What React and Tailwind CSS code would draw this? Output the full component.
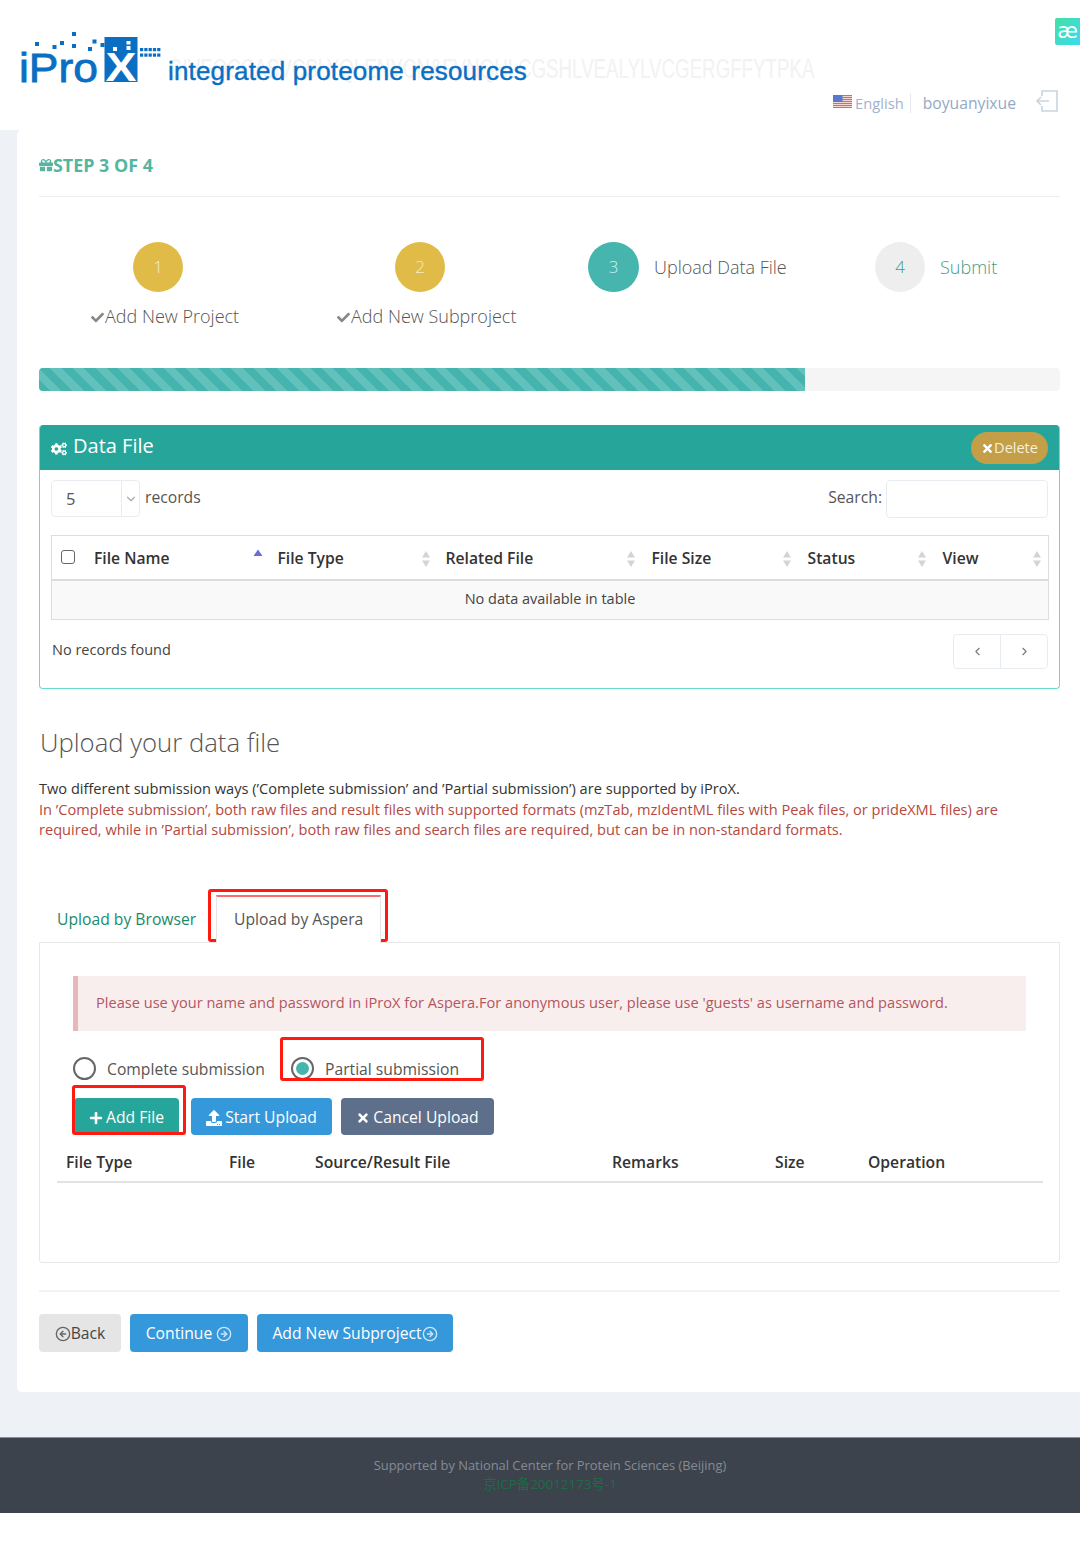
import React from "react";
import { FaGift, FaCheck, FaCogs, FaTimes, FaPlus, FaUpload } from "react-icons/fa";
import { CircleArrowRight, CircleArrowLeft, ChevronDown, ChevronLeft, ChevronRight } from "lucide-react";

const Logo = () => (
  <svg width="145" height="56" viewBox="0 0 145 56" className="shrink-0">
    <g fill="#0a6fc2">
      <rect x="15" y="12" width="4" height="4" />
      <rect x="32.5" y="15" width="4" height="4" />
      <rect x="40" y="11" width="4" height="4" />
      <rect x="52" y="2" width="4" height="4" />
      <rect x="52" y="14" width="4" height="4" />
      <rect x="68" y="17" width="4" height="4" />
      <rect x="72.5" y="9.5" width="4" height="4" />
      <rect x="80.5" y="13" width="4" height="4" />
      <rect x="84.5" y="7" width="33" height="45" />
      {[0, 1, 2, 3, 4].map((c) => (
        <g key={c}>
          <rect x={120 + c * 4.3} y="18" width="3.2" height="3.2" />
          <rect x={120 + c * 4.3} y="23.5" width="3.2" height="3.2" />
        </g>
      ))}
    </g>
    <rect x="93" y="17" width="4" height="4" fill="#fff" />
    <rect x="106.5" y="11" width="4" height="3.5" fill="#fff" />
    <rect x="106.5" y="16" width="4" height="4" fill="#fff" />
    <text x="-1" y="52" fontFamily="Liberation Sans" fontSize="40" fontWeight="400" fill="#0a6fc2" stroke="#0a6fc2" strokeWidth="0.8" textLength="79" lengthAdjust="spacingAndGlyphs">iPro</text>
    <text x="85.5" y="51" fontFamily="Liberation Sans" fontSize="40" fontWeight="700" fill="#fff" textLength="31" lengthAdjust="spacingAndGlyphs">X</text>
  </svg>
);

const Flag = () => (
  <svg width="19" height="13" viewBox="0 0 18 13" preserveAspectRatio="none" className="shrink-0">
    <rect width="18" height="13" fill="#f3d6d2" />
    {[0, 2, 4, 6, 8, 10, 12].map((y) => (
      <rect key={y} y={y} width="18" height="1" fill="#e2675a" />
    ))}
    <rect width="9" height="7" fill="#5a78d0" />
  </svg>
);

const Logout = () => (
  <svg width="24" height="24" viewBox="0 0 24 24" fill="none" stroke="#c9d5de" strokeWidth="1.6" className="shrink-0">
    <path d="M7 7V2h15v20H7v-5" />
    <path d="M14 12H2M6 8l-4 4 4 4" />
  </svg>
);

const Sort = () => (
  <svg width="10" height="16" viewBox="0 0 10 16" className="shrink-0">
    <path d="M5 0l4 6.5H1z" fill="#d4d4d4" />
    <path d="M5 16L1 9.5h8z" fill="#d4d4d4" />
  </svg>
);

const SortUp = () => (
  <svg width="10" height="16" viewBox="0 0 10 16" className="shrink-0 mb-[4px]">
    <path d="M5 0.5l4.5 6.5H.5z" fill="#6a6fd8" />
  </svg>
);

const Th = ({ children, up, wide }) => (
  <th className={`h-[44px] pt-[4px] pr-[6px] font-semibold text-left text-[#333] ${wide ? "pl-[10px]" : "pl-[9px]"}`}>
    <div className="flex items-center justify-between">
      <div className="flex items-center">{children}</div>
      {up ? <SortUp /> : <Sort />}
    </div>
  </th>
);

const App = () => (
  <div className="bg-white h-[1546px] text-[15.7px] text-[#444] font-['Open_Sans','Noto_Sans_CJK_SC',sans-serif] overflow-hidden">
    <header className="relative h-[130px] bg-white flex justify-between">
      <div className="flex items-start pl-[20px] pt-[30px]">
        <Logo />
        <div className="relative mt-[25px] ml-[3px]">
          <span className="absolute left-0 -top-[6px] origin-left scale-x-[0.693] whitespace-nowrap font-['Liberation_Sans',sans-serif] text-[27px] text-[#f1f2f3]">
            GIVEQCCASVCSLYQLENYCN&amp;FVNQHLCGSHLVEALYLVCGERGFFYTPKA
          </span>
          <span className="relative whitespace-nowrap font-['Liberation_Sans',sans-serif] text-[26px] tracking-[0.17px] leading-[32px] text-[#0a6fc2] [-webkit-text-stroke:0.4px_#0a6fc2]">
            integrated proteome resources
          </span>
        </div>
      </div>
      <div className="flex items-center h-[24px] mt-[89px] pr-[21px]">
        <Flag />
        <span className="ml-[3px] mt-[4px] text-[14.7px] text-[#9fb3cc] pr-[6px] border-r border-[#e8ecf0] leading-[20px]">English</span>
        <span className="ml-[12px] mt-[6px] text-[15.7px] text-[#93a9c5]">boyuanyixue</span>
        <span className="ml-[19px]"><Logout /></span>
      </div>
      <div className="absolute right-0 top-[18px] w-[25px] h-[27px] rounded-l-[2px] bg-gradient-to-br from-[#43e0a0] to-[#3fd9f0] flex items-center justify-center text-white text-[21px] leading-none font-['DejaVu_Sans',sans-serif] overflow-hidden">
        æ
      </div>
    </header>

    <div className="bg-[#eef1f6] pl-[17px] pb-[45px]">
      <main className="bg-white rounded-l-[5px] h-[1262px] pl-[22px] pr-[20px]">
        <div className="h-[67px] border-b border-[#eeeeee] flex items-center pt-[4px] font-bold text-[17.9px] text-[#55b5a0]">
          <FaGift className="text-[14px]" />
          <span>STEP 3 OF 4</span>
        </div>

        <div className="grid grid-cols-[262px_262px_287px_185px] pt-[45px] h-[171px]">
          <div className="pl-[94px]">
            <div className="w-[50px] h-[50px] rounded-full bg-[#e0bb48] text-[#f7ecc8] text-[17px] flex items-center justify-center font-light">1</div>
            <div className="-ml-[42px] mt-[12px] flex items-center gap-[1px] whitespace-nowrap text-[18px] font-light text-[#555] h-[25px]">
              <FaCheck className="text-[#888] text-[13px] mt-[2px]" />Add New Project
            </div>
          </div>
          <div className="pl-[94px]">
            <div className="w-[50px] h-[50px] rounded-full bg-[#e0bb48] text-[#f7ecc8] text-[17px] flex items-center justify-center font-light">2</div>
            <div className="-ml-[58px] mt-[12px] flex items-center gap-[1px] whitespace-nowrap text-[18px] font-light text-[#555] h-[25px]">
              <FaCheck className="text-[#888] text-[13px] mt-[2px]" />Add New Subproject
            </div>
          </div>
          <div className="pl-[25px] flex items-start gap-[15px]">
            <div className="w-[51px] h-[50px] rounded-full bg-[#45b5ae] text-[#d3efed] text-[17px] flex items-center justify-center font-light">3</div>
            <span className="text-[18px] font-light text-[#555] leading-[50px] whitespace-nowrap">Upload Data File</span>
          </div>
          <div className="pl-[25px] flex items-start gap-[15px]">
            <div className="w-[50px] h-[50px] rounded-full bg-[#eeeeee] text-[#3f9c8b] text-[17px] flex items-center justify-center font-light">4</div>
            <span className="text-[18px] font-light text-[#3f9c8b] leading-[50px] whitespace-nowrap">Submit</span>
          </div>
        </div>

        <div className="h-[23px] rounded-[4px] bg-[#f5f5f5] overflow-hidden">
          <div className="h-full w-[75%] bg-[repeating-linear-gradient(45deg,#45b4ae_0,#45b4ae_8px,#62c1bb_8px,#62c1bb_16px)]" />
        </div>

        <section className="mt-[34px] h-[264px] border border-t-0 border-[#66dcd0] rounded-[4px] overflow-hidden">
          <div className="h-[45px] -mx-px bg-[#26a69a] flex items-center justify-between pl-[12px] pr-[12px]">
            <div className="flex items-center gap-[6px] text-white text-[20px] font-normal">
              <FaCogs className="text-[16px] mt-[3px]" />
              <span className="pb-[4px]">Data File</span>
            </div>
            <button className="h-[32px] w-[77px] mt-[1px] rounded-full bg-[#c49f47] text-[#f7efdc] text-[14.5px] flex items-center justify-center">
              <FaTimes className="text-[13px] text-white" />Delete
            </button>
          </div>
          <div className="px-[11px]">
            <div className="flex justify-between mt-[10px]">
              <div className="flex items-start">
                <div className="w-[89px] h-[37px] border border-[#e8ecf0] rounded-[4px] flex">
                  <span className="w-[69px] pl-[14px] leading-[35px] text-[16.5px] text-[#555]">5</span>
                  <span className="flex-1 border-l border-[#e8ecf0] flex items-center justify-center">
                    <ChevronDown size={14} className="text-[#aaa]" />
                  </span>
                </div>
                <span className="ml-[5px] mt-[6px] text-[#555]">records</span>
              </div>
              <div className="flex items-start">
                <span className="mr-[4px] mt-[6px] text-[#555]">Search:</span>
                <div className="w-[162px] h-[38px] border border-[#e8ecf0] rounded-[4px]" />
              </div>
            </div>
            <table className="mt-[17px] w-[997px] table-fixed border border-[#dddddd] border-collapse">
              <colgroup>
                <col className="w-[217px]" /><col className="w-[168px]" /><col className="w-[205px]" /><col className="w-[156px]" /><col className="w-[135px]" /><col className="w-[116px]" />
              </colgroup>
              <thead>
                <tr className="border-b-2 border-[#dddddd]">
                  <Th up>
                    <span className="w-[14px] h-[14px] border border-[#666] rounded-[3px] mr-[19px] mb-[5px]" />
                    File Name
                  </Th>
                  <Th>File Type</Th>
                  <Th>Related File</Th>
                  <Th wide>File Size</Th>
                  <Th wide>Status</Th>
                  <Th wide>View</Th>
                </tr>
              </thead>
              <tbody>
                <tr className="bg-[#f9f9f9]">
                  <td colSpan={6} className="h-[40px] pb-[2px] text-center text-[14.5px] text-[#444]">No data available in table</td>
                </tr>
              </tbody>
            </table>
            <div className="flex justify-between items-start mt-[14px]">
              <span className="mt-[5px] pl-px text-[14.5px] text-[#444]">No records found</span>
              <div className="w-[95px] h-[35px] border border-[#e8ecf0] rounded-[4px] flex text-[#777]">
                <span className="flex-1 border-r border-[#e8ecf0] flex items-center justify-center"><ChevronLeft size={13} /></span>
                <span className="flex-1 flex items-center justify-center"><ChevronRight size={13} /></span>
              </div>
            </div>
          </div>
        </section>

        <h2 className="mt-[35px] pl-px text-[25.7px] font-light text-[#555] leading-[38px]">Upload your data file</h2>

        <div className="mt-[16px] max-w-[1000px] text-[14.6px] leading-[20.5px]">
          <p className="text-[#333]">Two different submission ways (’Complete submission’ and ’Partial submission’) are supported by iProX.</p>
          <p className="text-[#b5493f]">In ’Complete submission’, both raw files and result files with supported formats (mzTab, mzIdentML files with Peak files, or prideXML files) are required, while in ’Partial submission’, both raw files and search files are required, but can be in non-standard formats.</p>
        </div>

        <div className="mt-[55px] flex h-[48px] relative z-10 -mb-px">
          <a className="ml-[18px] mt-[13px] text-[#1a8a6a] w-[159px] whitespace-nowrap">Upload by Browser</a>
          <div className="w-[165px] border-x border-t-2 border-x-[#e5e5e5] border-t-[#ff6b6b] border-b-0 bg-white pl-[17px] pt-[11px] text-[#555] whitespace-nowrap">Upload by Aspera</div>
        </div>
        <div className="h-[321px] border border-[#e7e7e7] rounded-b-[3px] pl-[33px] pr-[33px] pt-[33px]">
          <div className="h-[55px] border-l-[5px] border-[#e6b8bd] bg-[#f8eeee] pl-[18px] flex items-center text-[14.6px] text-[#b5555e] whitespace-nowrap">
            Please use your name and password in iProX for Aspera.For anonymous user, please use 'guests' as username and password.
          </div>
          <div className="flex items-center mt-[26px] h-[24px] text-[#555]">
            <span className="w-[23px] h-[23px] rounded-full border-2 border-[#666] bg-white" />
            <span className="ml-[11px] mt-[3px] w-[184px]">Complete submission</span>
            <span className="w-[23px] h-[23px] rounded-full border-2 border-[#666] bg-white flex items-center justify-center">
              <span className="w-[13px] h-[13px] rounded-full bg-[#45b5ae]" />
            </span>
            <span className="ml-[11px] mt-[3px]">Partial submission</span>
          </div>
          <div className="flex mt-[17px] ml-px text-white">
            <button className="w-[105px] h-[37px] pt-[4px] rounded-[4px] bg-[#26a69a] flex items-center justify-center gap-[3px]"><FaPlus className="text-[14px]" />Add File</button>
            <button className="ml-[12px] w-[141px] h-[37px] pt-[4px] rounded-[4px] bg-[#3498db] flex items-center justify-center gap-[3px]"><FaUpload className="text-[16px]" />Start Upload</button>
            <button className="ml-[9px] w-[153px] h-[37px] pt-[4px] rounded-[4px] bg-[#5d6f8a] flex items-center justify-center gap-[3px]"><FaTimes className="text-[14px]" />Cancel Upload</button>
          </div>
          <div className="-ml-[16px] -mr-[17px] mt-[8px] h-[40px] pt-[2px] border-b-2 border-[#e3e3e3] grid grid-cols-[163px_86px_297px_163px_93px_1fr] pl-[9px] items-center font-semibold text-[#333]">
            <span>File Type</span><span>File</span><span>Source/Result File</span><span>Remarks</span><span>Size</span><span>Operation</span>
          </div>
        </div>

        <div className="mt-[27px] border-t-2 border-[#f3f3f3] flex pt-[22px]">
          <button className="w-[82px] h-[38px] pt-[2px] rounded-[4px] bg-[#e5e5e5] text-[#444] flex items-center justify-center"><CircleArrowLeft size={16} className="text-[#666]" />Back</button>
          <button className="ml-[9px] w-[118px] h-[38px] pt-[2px] rounded-[4px] bg-[#3498db] text-white flex items-center justify-center gap-[4px]">Continue<CircleArrowRight size={16} className="text-[#cfe6f7]" /></button>
          <button className="ml-[9px] w-[196px] h-[38px] pt-[2px] rounded-[4px] bg-[#3498db] text-white flex items-center justify-center">Add New Subproject<CircleArrowRight size={16} className="text-[#cfe6f7]" /></button>
        </div>
      </main>
    </div>

    <footer className="h-[76px] bg-[#3c434d] border-t border-[#8a8f96] flex flex-col items-center pl-[20px] pt-[18px] leading-[19px]">
      <span className="text-[12.9px] text-[#858b94]">Supported by National Center for Protein Sciences (Beijing)</span>
      <span className="text-[13.4px] text-[#1f6b45]">京ICP备20012173号-1</span>
    </footer>

    <div className="absolute left-[208px] top-[889px] w-[180px] h-[53px] border-[3px] border-[#ff1a10] rounded-[3px]" />
    <div className="absolute left-[280px] top-[1037px] w-[204px] h-[44px] border-[3px] border-[#ff1a10] rounded-[3px]" />
    <div className="absolute left-[72px] top-[1085px] w-[114px] h-[50px] border-[3px] border-[#ff1a10] rounded-[3px]" />
  </div>
);

export default App;
